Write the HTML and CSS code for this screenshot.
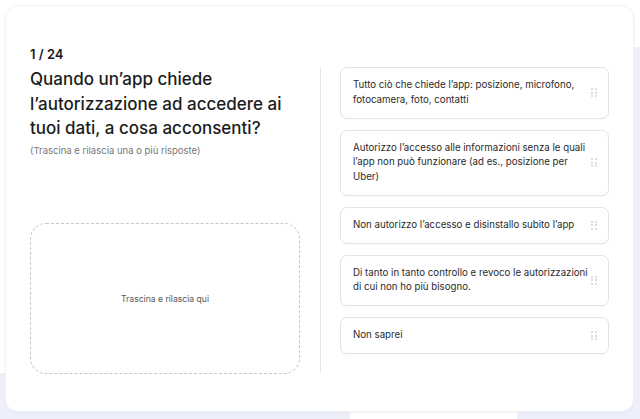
FILE: index.html
```html
<!DOCTYPE html>
<html lang="it">
<head>
<meta charset="utf-8">
<title>Quiz</title>
<link rel="stylesheet" href="styles.css">
</head>
<body>
<div class="backdrop">
  <div class="blob blob-top"></div>
  <div class="blob blob-left"></div>
  <div class="blob blob-bottom"></div>
</div>
<main class="card">
  <div class="counter">1 / 24</div>
  <div class="columns">
    <section class="left">
      <h1 class="question">Quando un’app chiede l’autorizzazione ad accedere ai tuoi dati, a cosa acconsenti?</h1>
      <p class="hint">(Trascina e rilascia una o più risposte)</p>
      <div class="dropzone">Trascina e rilascia qui</div>
    </section>
    <div class="divider"></div>
    <section class="right">
      <div class="option"><span class="option-text">Tutto ciò che chiede l’app: posizione, microfono, fotocamera, foto, contatti</span><span class="handle"><i></i><i></i><i></i><i></i><i></i><i></i></span></div>
      <div class="option"><span class="option-text">Autorizzo l’accesso alle informazioni senza le quali l’app non può funzionare (ad es., posizione per Uber)</span><span class="handle"><i></i><i></i><i></i><i></i><i></i><i></i></span></div>
      <div class="option"><span class="option-text">Non autorizzo l’accesso e disinstallo subito l’app</span><span class="handle"><i></i><i></i><i></i><i></i><i></i><i></i></span></div>
      <div class="option"><span class="option-text">Di tanto in tanto controllo e revoco le autorizzazioni di cui non ho più bisogno.</span><span class="handle"><i></i><i></i><i></i><i></i><i></i><i></i></span></div>
      <div class="option"><span class="option-text">Non saprei</span><span class="handle"><i></i><i></i><i></i><i></i><i></i><i></i></span></div>
    </section>
  </div>
</main>
</body>
</html>
```

FILE: styles.css
```css
* { box-sizing: border-box; }
html, body { margin: 0; padding: 0; }
body {
  width: 640px;
  height: 419px;
  overflow: hidden;
  background: #edf0fb;
  font-family: Inter, "Noto Sans", "Liberation Sans", sans-serif;
  color: #1e1e1e;
  position: relative;
  padding: 6px 7px 8px 6px;
}
.backdrop { position: absolute; inset: 0; z-index: 0; }
.blob { position: absolute; background: #ffffff; }
.blob-top { left: 0; top: 0; width: 640px; height: 47px; }
.blob-left { left: 0; top: 0; width: 300px; height: 373px; }
.blob-bottom { left: 350px; top: 380px; width: 167px; height: 39px; }

.card {
  position: relative;
  z-index: 1;
  height: 405px;
  background: #fff;
  border-radius: 12px;
  box-shadow: 0 0 0 1px #f1f1f3, 0 1px 3px rgba(90, 100, 150, 0.12);
  padding: 40px 24px 37px 24px;
  display: flex;
  flex-direction: column;
}
.counter {
  font-size: 13px;
  font-weight: 600;
  line-height: 16px;
  margin: 0 0 5px 0;
  color: #1a1a1a;
}
.columns {
  flex: 1;
  display: grid;
  grid-template-columns: 270px 1px 1fr;
  column-gap: 20px;
}
.left { display: flex; flex-direction: column; }
.question {
  margin: 0;
  font-size: 17px;
  font-weight: 500;
  line-height: 24.5px;
  color: #1c1c1c;
  letter-spacing: 0;
}
.hint {
  margin: 3px 0 0 0;
  font-size: 9.5px;
  line-height: 13px;
  color: #777;
}
.dropzone {
  margin-top: auto;
  height: 151px;
  border: 1.5px dashed #c6c6c6;
  border-radius: 16px;
  display: flex;
  align-items: center;
  justify-content: center;
  font-size: 8.6px;
  color: #555;
}
.divider { background: #e6e6e6; width: 1px; margin-bottom: 1px; }
.right {
  display: flex;
  flex-direction: column;
  gap: 11px;
  margin-left: -1px;
}
.option {
  display: flex;
  align-items: center;
  justify-content: space-between;
  border: 1px solid #e3e3e6;
  border-radius: 7px;
  padding: 10.25px 11px 10.25px 12px;
  min-height: 37px;
  background: #fff;
  box-shadow: 0 1px 1px rgba(0,0,0,0.02);
}
.option-text {
  font-size: 9.7px;
  line-height: 14.5px;
  color: #2b2b2b;
  max-width: 236px;
}
.handle {
  display: grid;
  grid-template-columns: 2px 2px;
  grid-auto-rows: 2px;
  gap: 1.5px 2px;
  flex: none;
}
.handle i {
  display: block;
  width: 2px;
  height: 2px;
  border-radius: 1px;
  background: #d2d2d2;
}
```
